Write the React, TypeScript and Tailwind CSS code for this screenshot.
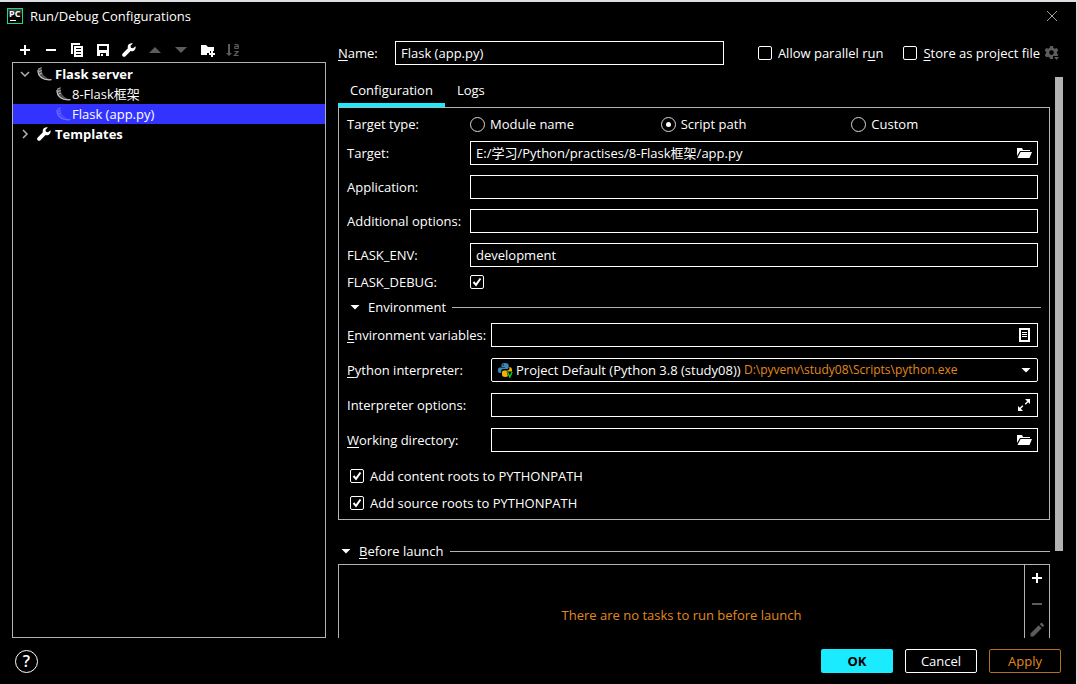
import React, { useState } from "react";

type ChildrenProps = { children: React.ReactNode };

type IconProps = {
  children: React.ReactNode;
  className?: string;
};

const Icon: React.FC<IconProps> = ({ children, className = "text-white" }) => (
  <svg
    viewBox="0 0 16 16"
    className={`size-4 shrink-0 ${className}`}
    fill="currentColor"
    aria-hidden="true"
  >
    {children}
  </svg>
);

const PlusIcon = () => (
  <Icon>
    <path d="M7 3h2v4h4v2H9v4H7V9H3V7h4z" />
  </Icon>
);

const MinusIcon = ({ className }: { className?: string }) => (
  <Icon className={className}>
    <path d="M3 7h10v2H3z" />
  </Icon>
);

const CopyIcon = () => (
  <Icon>
    <path d="M2 1h9v2H4v9H2z" />
    <path
      fillRule="evenodd"
      d="M5 4h9v11H5zM7 6v1h5V6zM7 9v1h5V9zM7 12v1h5v-1z"
    />
  </Icon>
);

const SaveIcon = () => (
  <Icon>
    <path
      fillRule="evenodd"
      d="M2 2h12v12H2zM4 4v4h8V4zM5 11v3h6v-3z"
    />
    <path d="M6 12h2v2H6z" />
  </Icon>
);

const WrenchIcon = () => (
  <Icon>
    <path d="M14.500 4.200 12 6.200 9.900 5.700 9.500 3.800 11.800 1.500C9.700.9 7.400 2 6.800 4c-.2.8-.2 1.500.1 2.200L1.700 11.500c-.8.8-.8 2 0 2.800.8.700 2 .700 2.800 0l5.100-5.300c.6.3 1.400.4 2.200.2 2.100-.5 3.300-2.900 2.700-5z" />
  </Icon>
);

const FolderOpenIcon = () => (
  <Icon>
    <path d="M1 3h5l1 2h7v1H4L1 11z" />
    <path d="M4.600 7H16l-2.500 6H1.500z" />
  </Icon>
);

const FolderAddIcon = () => (
  <Icon>
    <path d="M2 3h5l2 2h6v4h-4v2H8v2H2z" />
    <path d="M12 9h2v2h2v2h-2v2h-2v-2h-2v-2h2z" />
  </Icon>
);

const SortIcon = () => (
  <Icon className="text-[#5c5c5c]">
    <path d="M3 2h2v9h2l-3 3-3-3h2z" />
    <path
      d="M9.500 2.600h2.800q1 0 1 1v3M13.300 4.500h-2.500q-1.300 0-1.300 1t1.300 1h2.500M9.500 9.500h3.600l-3.600 4h4"
      fill="none"
      stroke="currentColor"
      strokeWidth="1.200"
    />
  </Icon>
);

const GearIcon = () => (
  <Icon className="text-[#5c5c5c]">
    <path
      fillRule="evenodd"
      d="M6 1h3l.4 1.900 1.500.8 1.900-.6 1.500 2.500-1.400 1.300v1.600l1.400 1.300-1.500 2.500-1.900-.6-1.500.8L9 14H6l-.4-1.500-1.500-.8-1.900.6L.7 9.800l1.400-1.300V6.900L.7 5.600l1.500-2.500 1.900.6 1.500-.8zM7.500 5.300a2.300 2.300 0 1 0 0 4.600 2.300 2.300 0 0 0 0-4.600z"
    />
    <path d="M9 11h7v4H9z" fill="#000" />
    <path d="M10 12h5l-2.500 3z" />
  </Icon>
);

const ListIcon = () => (
  <Icon>
    <path
      fillRule="evenodd"
      d="M3 1h11v14H3zM5 3v10h7V3z"
    />
    <path d="M6 5h5v1H6zM6 7h5v1H6zM6 9h5v1H6z" />
  </Icon>
);

const ExpandIcon = () => (
  <Icon>
    <path d="M9 2h5v5l-1.800-1.800-2.500 2.500-1-1 2.500-2.500zM2 14V9l1.800 1.800 2.500-2.500 1 1-2.500 2.500L7 14z" />
  </Icon>
);

const PencilIcon = () => (
  <Icon className="text-[#5c5c5c]">
    <path d="M1.500 11.500 9.700 3.300l3 3L4.500 14.500h-3zM10.700 2.300l1.200-1.200q.6-.5 1.200 0l1.800 1.800q.5.600 0 1.200l-1.200 1.200z" />
  </Icon>
);

// powder horn: dim body, brighter outer edge and bands near the mouth
const FlaskIcon = ({ className = "text-[#c8c8c8]" }: { className?: string }) => (
  <Icon className={className}>
    <path
      d="M2 3.500 5.500 2c0 3 .6 5.200 2.300 7.200 1.600 2 3.800 3.300 7.200 4.200-4 .8-7.500.2-9.800-1.900C2.700 9.300 1.500 6.500 2 3.500z"
      opacity="0.400"
    />
    <path
      d="M2 4C1.800 7.200 3.300 10 5.600 11.800c2.400 1.900 5.400 2.300 9.900 1.900"
      fill="none"
      stroke="currentColor"
      strokeWidth="1.200"
    />
    <path
      d="M2 3.300 5.700 1.700M3 5.500l2.800-1M3.500 8l2.500-1"
      fill="none"
      stroke="currentColor"
      strokeWidth="0.900"
    />
  </Icon>
);

const PythonIcon = () => (
  <Icon>
    <path
      d="M7.500 1C5.400 1 4.500 1.900 4.500 3.200V5H8v.6H3C1.500 5.600.8 6.800.8 8.300S1.600 11 3 11h1.200V9.200c0-1.200 1-2.100 2.300-2.100h3.300c1.100 0 1.900-.8 1.900-1.900V3.200C11.700 1.700 10.200 1 7.500 1z"
      fill="#3e86b8"
    />
    <circle cx="6.200" cy="2.900" r="0.700" fill="#000" />
    <path
      d="M12.400 5v1.500c0 1.200-1 2.100-2.200 2.100H7c-1.200 0-2 .8-2 1.900v2.300C5 14.300 6.300 15 8.300 15c1 0 2-.2 2.700-.7L9.500 9.500H15C15.300 7 14.600 5 12.400 5z"
      fill="#f0b400"
    />
    <path
      d="m10.500 10 2.300 5 2.300-5"
      fill="none"
      stroke="#00d62f"
      strokeWidth="1.400"
    />
  </Icon>
);

const CaretDown = () => (
  <Icon>
    <path d="M3.500 6h9L8 10.500z" />
  </Icon>
);

const PyCharmLogo = () => (
  <div className="flex size-4 shrink-0 flex-col border border-[#21d789] bg-linear-to-b from-[#4a4a4a] to-black to-70% pl-px">
    <span className="text-[9px] leading-[9px] font-bold text-white">PC</span>
    <span className="mt-0.5 ml-px h-px w-1.5 shrink-0 bg-white" />
  </div>
);

// underlined letter of a label, used as its keyboard shortcut
const Key: React.FC<ChildrenProps> = ({ children }) => (
  <span className="underline underline-offset-2">{children}</span>
);

type CheckProps = {
  id: string;
  defaultChecked?: boolean;
  children?: React.ReactNode;
};

const Check: React.FC<CheckProps> = ({ id, defaultChecked, children }) => (
  <div className="flex items-center gap-1.5">
    <span className="relative flex size-3.5 shrink-0">
      <input
        id={id}
        type="checkbox"
        defaultChecked={defaultChecked}
        className="peer size-3.5 appearance-none rounded-xs border border-white"
      />
      <svg
        viewBox="0 0 14 14"
        className="pointer-events-none absolute inset-0 hidden size-3.5 peer-checked:block"
        aria-hidden="true"
      >
        <path
          d="M3.500 7 6 9.800 10.500 3.500"
          fill="none"
          stroke="#fff"
          strokeWidth="2"
        />
      </svg>
    </span>
    {children && <label htmlFor={id}>{children}</label>}
  </div>
);

type RadioProps = {
  id: string;
  text: string;
  defaultChecked?: boolean;
};

const Radio: React.FC<RadioProps> = ({ id, text, defaultChecked }) => (
  <div className="flex items-center gap-[5px]">
    <input
      id={id}
      type="radio"
      name="target-type"
      defaultChecked={defaultChecked}
      className="grid size-[15px] shrink-0 appearance-none place-content-center rounded-full border border-[#d8d8d8] before:size-[5px] before:rounded-full checked:before:bg-white"
    />
    <label htmlFor={id}>{text}</label>
  </div>
);

type FieldProps = {
  id: string;
  label: React.ReactNode;
  defaultValue?: string;
  action?: React.ReactNode;
  actionLabel?: string;
};

const Field: React.FC<FieldProps> = ({
  id,
  label,
  defaultValue,
  action,
  actionLabel,
}) => (
  <>
    <label htmlFor={id}>{label}</label>
    <div className="flex h-6 items-center border border-white pr-[5px]">
      <input
        id={id}
        type="text"
        defaultValue={defaultValue}
        className="min-w-0 flex-1 bg-transparent pl-[5px] outline-none"
      />
      {action && (
        <button type="button" aria-label={actionLabel}>
          {action}
        </button>
      )}
    </div>
  </>
);

type ToolButtonProps = {
  label: string;
  children: React.ReactNode;
};

const ToolButton: React.FC<ToolButtonProps> = ({ label, children }) => (
  <button
    type="button"
    aria-label={label}
    className="flex h-6 w-[26px] items-center justify-center"
  >
    {children}
  </button>
);

const Sidebar = () => {
  const [selected, setSelected] = useState("app");

  return (
    <aside className="flex w-[314px] shrink-0 flex-col pt-2">
      <div className="flex">
        <ToolButton label="Add">
          <PlusIcon />
        </ToolButton>
        <ToolButton label="Remove">
          <MinusIcon />
        </ToolButton>
        <ToolButton label="Copy">
          <CopyIcon />
        </ToolButton>
        <ToolButton label="Save">
          <SaveIcon />
        </ToolButton>
        <ToolButton label="Edit templates">
          <WrenchIcon />
        </ToolButton>
        <ToolButton label="Move up">
          <Icon className="text-[#5c5c5c]">
            <path d="M2 11h12L8 5z" />
          </Icon>
        </ToolButton>
        <ToolButton label="Move down">
          <Icon className="text-[#5c5c5c]">
            <path d="M2 5h12l-6 6z" />
          </Icon>
        </ToolButton>
        <ToolButton label="New folder">
          <FolderAddIcon />
        </ToolButton>
        <ToolButton label="Sort">
          <SortIcon />
        </ToolButton>
      </div>
      <div className="flex-1 border border-[#b3b3b3] pt-px">
        <button
          type="button"
          className="flex h-5 w-full items-center gap-[3px] pl-1 font-bold"
        >
          <Icon className="text-[#b3b3b3]">
            <path
              d="m4 6 4 4 4-4"
              fill="none"
              stroke="currentColor"
              strokeWidth="1.500"
            />
          </Icon>
          <FlaskIcon />
          Flask server
        </button>
        <button
          type="button"
          onClick={() => setSelected("framework")}
          className={`flex h-5 w-full items-center gap-px pl-[42px] ${
            selected === "framework" ? "bg-[#3333ff]" : ""
          }`}
        >
          <FlaskIcon />
          8-Flask框架
        </button>
        <button
          type="button"
          onClick={() => setSelected("app")}
          className={`flex h-5 w-full items-center gap-px pl-[42px] ${
            selected === "app" ? "bg-[#3333ff]" : ""
          }`}
        >
          <FlaskIcon className="text-[#6a6aff]" />
          Flask (app.py)
        </button>
        <button
          type="button"
          className="flex h-5 w-full items-center gap-[3px] pl-1 font-bold"
        >
          <Icon className="text-[#b3b3b3]">
            <path
              d="m6 4 4 4-4 4"
              fill="none"
              stroke="currentColor"
              strokeWidth="1.500"
            />
          </Icon>
          <WrenchIcon />
          Templates
        </button>
      </div>
    </aside>
  );
};

const ConfigurationPanel = () => {
  return (
    <section className="border border-[#b3b3b3] pt-1 pr-[11px] pb-1.5 pl-2">
      <div className="grid h-6 grid-cols-[123px_1fr] items-center">
        <span>Target type:</span>
        <div className="-mr-1 grid grid-cols-3" role="radiogroup" aria-label="Target type">
          <Radio id="module-name" text="Module name" />
          <Radio id="script-path" text="Script path" defaultChecked />
          <Radio id="custom" text="Custom" />
        </div>
      </div>
      <div className="mt-[5px] grid grid-cols-[123px_1fr] items-center gap-y-2.5">
        <Field
          id="target"
          label="Target:"
          defaultValue="E:/学习/Python/practises/8-Flask框架/app.py"
          action={<FolderOpenIcon />}
          actionLabel="Browse target"
        />
        <Field id="application" label="Application:" />
        <Field id="additional" label="Additional options:" />
        <Field id="flask-env" label="FLASK_ENV:" defaultValue="development" />
      </div>
      <div className="mt-2 grid h-3.5 grid-cols-[123px_1fr] items-center leading-[14px]">
        <label htmlFor="flask-debug">FLASK_DEBUG:</label>
        <Check id="flask-debug" defaultChecked />
      </div>
      <div className="mt-2 -mr-[3px] flex h-5 items-center gap-1.5">
        <button type="button" className="flex items-center gap-[5px]">
          <CaretDown />
          Environment
        </button>
        <div className="h-px flex-1 bg-[#b3b3b3]" />
      </div>
      <div className="mt-1.5 grid grid-cols-[144px_1fr] items-center gap-y-[11px]">
        <Field
          id="env-vars"
          label={
            <>
              <Key>E</Key>nvironment variables:
            </>
          }
          action={<ListIcon />}
          actionLabel="Edit environment variables"
        />
        <label htmlFor="interpreter">
          <Key>P</Key>ython interpreter:
        </label>
        <div className="flex h-6 min-w-0 items-center gap-[3px] rounded-xs border border-white pr-[3px] pl-[5px]">
          <PythonIcon />
          <select
            id="interpreter"
            className="shrink-0 appearance-none bg-transparent outline-none"
          >
            <option>Project Default (Python 3.8 (study08))</option>
          </select>
          <span className="min-w-0 flex-1 truncate text-[12px] text-[#e08a1e]">
            D:\pyvenv\study08\Scripts\python.exe
          </span>
          <CaretDown />
        </div>
        <Field
          id="interpreter-options"
          label="Interpreter options:"
          action={<ExpandIcon />}
          actionLabel="Expand"
        />
        <Field
          id="working-directory"
          label={
            <>
              <Key>W</Key>orking directory:
            </>
          }
          action={<FolderOpenIcon />}
          actionLabel="Browse working directory"
        />
      </div>
      <div className="mt-3.5 flex flex-col gap-[7px] pl-[3px]">
        <div className="flex h-5 items-center">
          <Check id="content-roots" defaultChecked>
            Add content roots to PYTHONPATH
          </Check>
        </div>
        <div className="flex h-5 items-center">
          <Check id="source-roots" defaultChecked>
            Add source roots to PYTHONPATH
          </Check>
        </div>
      </div>
    </section>
  );
};

const BeforeLaunch = () => {
  return (
    <>
      <div className="mt-[21px] flex h-5 items-center gap-1.5">
        <button type="button" className="flex items-center gap-[5px]">
          <CaretDown />
          <span>
            <Key>B</Key>efore launch
          </span>
        </button>
        <div className="h-px flex-1 bg-[#b3b3b3]" />
      </div>
      <div className="mt-[3px] flex min-h-0 flex-1 overflow-hidden border border-b-0 border-[#b3b3b3]">
        <p className="flex-1 pt-10 text-center text-[#e08a1e]">
          There are no tasks to run before launch
        </p>
        <div className="flex flex-col gap-0.5 border-l border-[#b3b3b3] pt-px">
          <button type="button" aria-label="Add task" className="flex size-6 shrink-0 items-center justify-center">
            <PlusIcon />
          </button>
          <button type="button" aria-label="Remove task" className="flex size-6 shrink-0 items-center justify-center">
            <MinusIcon className="text-[#5c5c5c]" />
          </button>
          <button type="button" aria-label="Edit task" className="flex size-6 shrink-0 items-center justify-center">
            <PencilIcon />
          </button>
        </div>
      </div>
    </>
  );
};

const App: React.FC = () => {
  const [tab, setTab] = useState("configuration");

  return (
    <div className="flex h-screen flex-col border-t-2 border-r border-[#dcdfe3] bg-black font-['Open_Sans','Noto_Sans_CJK_SC',sans-serif] text-[13px] leading-5 text-white">
      <header className="flex h-7 shrink-0 items-center pr-4 pl-[7px]">
        <PyCharmLogo />
        <h1 className="ml-[7px] flex-1">Run/Debug Configurations</h1>
        <button type="button" aria-label="Close">
          <Icon className="text-[#a0a0a0]">
            <path
              d="m3 3 10 10M13 3 3 13"
              fill="none"
              stroke="currentColor"
            />
          </Icon>
        </button>
      </header>

      <main className="flex min-h-0 flex-1 gap-3 pl-3">
        <Sidebar />
        <div className="flex min-w-0 flex-1 flex-col pt-[11px]">
          <div className="flex items-center pr-4">
            <label htmlFor="name" className="w-[57px] shrink-0">
              <Key>N</Key>ame:
            </label>
            <input
              id="name"
              type="text"
              defaultValue="Flask (app.py)"
              className="h-6 min-w-0 flex-1 border border-white bg-transparent px-[5px] outline-none"
            />
            <div className="ml-[34px] flex items-center">
              <Check id="parallel">
                Allow parallel r<Key>u</Key>n
              </Check>
            </div>
            <div className="ml-5 flex items-center">
              <Check id="store">
                <Key>S</Key>tore as project file
              </Check>
            </div>
            <button type="button" aria-label="Storage settings" className="ml-1">
              <GearIcon />
            </button>
          </div>

          <div className="mt-[9px] flex min-h-0 flex-1 items-start pt-[3px]">
            <div className="flex h-full min-w-0 flex-1 flex-col">
              <div className="flex h-[30px] shrink-0" role="tablist">
                <button
                  type="button"
                  role="tab"
                  aria-selected={tab === "configuration"}
                  onClick={() => setTab("configuration")}
                  className={`border-b-4 px-3 ${
                    tab === "configuration"
                      ? "border-[#1aebff]"
                      : "border-transparent"
                  }`}
                >
                  Configuration
                </button>
                <button
                  type="button"
                  role="tab"
                  aria-selected={tab === "logs"}
                  onClick={() => setTab("logs")}
                  className={`border-b-4 px-3 ${
                    tab === "logs" ? "border-[#1aebff]" : "border-transparent"
                  }`}
                >
                  Logs
                </button>
              </div>
              <ConfigurationPanel />
              <BeforeLaunch />
            </div>
            <div className="mr-[13px] ml-[5px] h-[474px] w-2 shrink-0 bg-[#b3b3b3]" />
          </div>
        </div>
      </main>

      <footer className="flex h-[46px] shrink-0 items-center gap-3 pr-[15px] pl-[15px]">
        <button
          type="button"
          aria-label="Help"
          className="mr-auto flex size-[23px] items-center justify-center rounded-full border border-white text-[16px] leading-4 font-semibold"
        >
          ?
        </button>
        <button
          type="button"
          className="h-6 w-[72px] rounded-xs bg-[#1aebff] font-bold text-black"
        >
          OK
        </button>
        <button
          type="button"
          className="h-6 w-[72px] rounded-xs border border-white"
        >
          Cancel
        </button>
        <button
          type="button"
          className="h-6 w-[72px] rounded-xs border border-[#b3701f] text-[#e08a1e]"
        >
          Apply
        </button>
      </footer>
    </div>
  );
};

export default App;
